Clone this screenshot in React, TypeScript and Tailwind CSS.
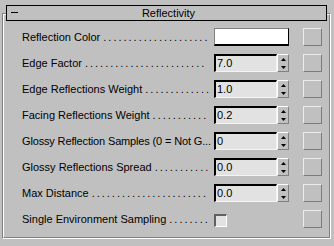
import { useLayoutEffect, useRef, useState } from "react";

const rows = [
  { label: "Reflection Color", kind: "color" },
  { label: "Edge Factor", kind: "spin", value: "7.0" },
  { label: "Edge Reflections Weight", kind: "spin", value: "1.0" },
  { label: "Facing Reflections Weight", kind: "spin", value: "0.2" },
  { label: "Glossy Reflection Samples (0 = Not G...", kind: "spin", value: "0", noDots: true },
  { label: "Glossy Reflections Spread", kind: "spin", value: "0.0" },
  { label: "Max Distance", kind: "spin", value: "0.0" },
  { label: "Single Environment Sampling", kind: "check" },
];

// dotted leader sized to the room left after the label
function Leader() {
  const ref = useRef<HTMLSpanElement>(null);
  const [count, setCount] = useState(0);

  useLayoutEffect(() => {
    if (!ref.current) return;
    const w = ref.current.getBoundingClientRect().width;
    setCount(Math.max(0, Math.floor(w / 5.1)));
  }, []);

  return (
    <span ref={ref} className="flex-1 min-w-0 ml-[3px] tracking-[2px]">
      {".".repeat(count)}
    </span>
  );
}

function Arrow({ down }: { down?: boolean }) {
  return (
    <svg width="5" height="3" viewBox="0 0 5 3" className="block">
      <polygon points={down ? "0,0 5,0 2.5,3" : "2.5,0 5,3 0,3"} fill="#000" />
    </svg>
  );
}

function Spinner({ value }: { value: string }) {
  return (
    <div className="flex h-[18px]">
      <div className="w-[63px] h-full bg-[#e2e2e2] border-t-2 border-l-2 border-t-black border-l-black border-b border-r border-b-[#f4f4f4] border-r-[#f4f4f4] pl-px text-[11px] leading-[14px] text-black">
        {value}
      </div>
      <div className="w-[12px] h-full flex flex-col">
        <div className="flex-1 flex items-center justify-center border-t border-l border-t-white border-l-white border-r border-r-[#808080]">
          <Arrow />
        </div>
        <div className="flex-1 flex items-center justify-center border-l border-l-white border-r border-b border-r-[#808080] border-b-[#808080]">
          <Arrow down />
        </div>
      </div>
    </div>
  );
}

export default function App() {
  return (
    <div
      className="w-[334px] h-[246px] bg-[#c0c0c0] pt-[13px] pl-[2px] pr-[3px] pb-[7px] overflow-hidden"
      style={{ fontFamily: '"Liberation Sans", Arial, sans-serif' }}
    >
      {/* etched frame */}
      <div className="h-full border-t border-l border-t-[#808080] border-l-[#808080] border-r border-b border-r-white border-b-white">
        <div className="h-full border-t border-l border-t-white border-l-white border-r border-b border-r-[#808080] border-b-[#808080]">
          {/* rollout title */}
          <div className="-mt-[10px] ml-[2px] w-[321px] h-[16px] border border-black bg-[#c0c0c0] flex items-center relative">
            <span className="absolute left-[4px] top-[6px] w-[7px] h-px bg-black" />
            <span className="flex-1 text-center text-[11px] leading-[14px] text-black pl-[4px]">Reflectivity</span>
          </div>

          <div className="mt-[3px] flex flex-col">
            {rows.map((r) => (
              <div key={r.label} className="h-[26px] flex items-center pl-[18px]">
                <div className="w-[190px] flex items-center whitespace-nowrap text-[11px] text-black">
                  <span className={r.noDots ? "shrink-0 tracking-[-0.15px]" : "shrink-0"}>{r.label}</span>
                  {!r.noDots && <Leader />}
                </div>
                <div className="ml-[2px] w-[75px] flex items-center">
                  {r.kind === "color" && (
                    <div className="w-[75px] h-[18px] bg-white border-t border-l border-t-[#808080] border-l-[#808080] border-b-2 border-r border-b-black border-r-black" />
                  )}
                  {r.kind === "spin" && <Spinner value={r.value ?? ""} />}
                  {r.kind === "check" && (
                    <div className="mt-[2px] w-[13px] h-[13px] bg-[#e2e2e2] border-t-2 border-l-2 border-t-[#606060] border-l-[#606060] border-b border-r border-b-white border-r-white" />
                  )}
                </div>
                <div className="ml-[14px] w-[19px] h-[18px] border-t border-l border-t-[#ececec] border-l-[#ececec] border-b border-r border-b-[#7c7c7c] border-r-[#7c7c7c]" />
              </div>
            ))}
          </div>
        </div>
      </div>
    </div>
  );
}
